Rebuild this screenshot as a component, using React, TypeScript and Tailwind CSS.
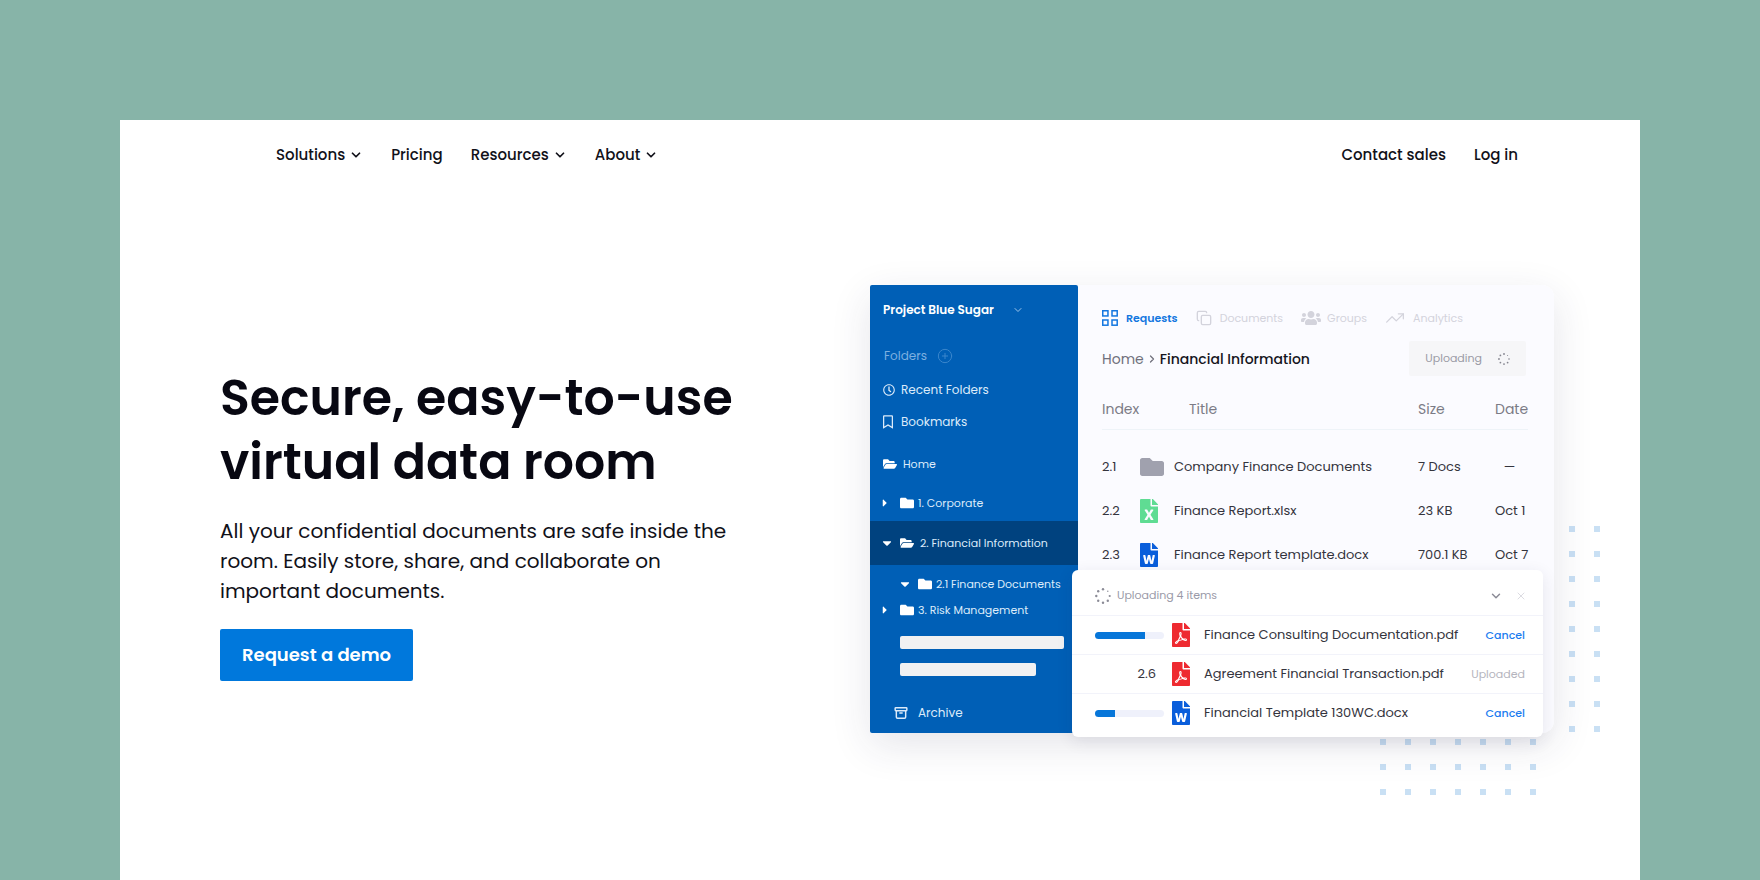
import * as React from "react";
import { Archive, ChevronDown, ChevronRight, CirclePlus, Copy, TrendingUp, X } from "lucide-react";
import {
  FaCaretDown,
  FaCaretRight,
  FaFileExcel,
  FaFilePdf,
  FaFileWord,
  FaFolder,
  FaFolderOpen,
  FaRegBookmark,
  FaRegClock,
  FaUsers,
} from "react-icons/fa";

type FileKind = "folder" | "excel" | "word" | "pdf";

interface DocumentRow {
  index: string;
  kind: FileKind;
  title: string;
  size: string;
  date: string;
}

interface UploadItem {
  kind: FileKind;
  title: string;
  progress?: number;
  index?: string;
}

const navLinks = [
  { label: "Solutions", menu: true },
  { label: "Pricing", menu: false },
  { label: "Resources", menu: true },
  { label: "About", menu: true },
];

const documents: DocumentRow[] = [
  { index: "2.1", kind: "folder", title: "Company Finance Documents", size: "7 Docs", date: "—" },
  { index: "2.2", kind: "excel", title: "Finance Report.xlsx", size: "23 KB", date: "Oct 1" },
  { index: "2.3", kind: "word", title: "Finance Report template.docx", size: "700.1 KB", date: "Oct 7" },
];

const uploads: UploadItem[] = [
  { kind: "pdf", title: "Finance Consulting Documentation.pdf", progress: 72 },
  { kind: "pdf", title: "Agreement Financial Transaction.pdf", index: "2.6" },
  { kind: "word", title: "Financial Template 130WC.docx", progress: 29 },
];

function FileIcon({ kind }: { kind: FileKind }) {
  if (kind === "folder") return <FaFolder className="size-6 text-[#a0a1ae]" />;
  if (kind === "excel") return <FaFileExcel className="h-6 w-[18px] text-[#5fdc93]" />;
  if (kind === "word") return <FaFileWord className="h-6 w-[18px] text-[#0a5edb]" />;
  return <FaFilePdf className="h-6 w-[18px] text-[#ee2a30]" />;
}

function GridIcon() {
  return (
    <svg viewBox="0 0 16 16" className="size-4" fill="none" stroke="currentColor" strokeWidth="1.5" aria-hidden="true">
      <rect x="0.75" y="0.75" width="5.2" height="5.2" />
      <rect x="10" y="0.75" width="5.2" height="5.2" />
      <rect x="0.75" y="10" width="5.2" height="5.2" />
      <rect x="10" y="10" width="5.2" height="5.2" />
    </svg>
  );
}

function Spinner({ className }: { className: string }) {
  return (
    <svg viewBox="0 0 16 16" className={className} fill="currentColor" aria-hidden="true">
      <circle cx="8" cy="1.3" r="1.2" />
      <circle cx="12.8" cy="3.2" r="0.7" />
      <circle cx="14.7" cy="8" r="1.1" />
      <circle cx="12.8" cy="12.8" r="1.2" />
      <circle cx="8" cy="14.7" r="1.2" />
      <circle cx="3.2" cy="12.8" r="1.2" />
      <circle cx="1.3" cy="8" r="1.2" />
      <circle cx="3.2" cy="3.2" r="1.2" />
    </svg>
  );
}

// Decorative grid of small squares behind the product window
function Dots({ columns, rows, className }: { columns: number; rows: number; className: string }) {
  const width = (columns - 1) * 25 + 6;
  const height = (rows - 1) * 25 + 6;
  return (
    <svg width={width} height={height} className={className} fill="#c9e0f4" aria-hidden="true">
      {Array.from({ length: columns * rows }, (_, i) => (
        <rect key={i} x={(i % columns) * 25} y={Math.floor(i / columns) * 25} width="6" height="6" />
      ))}
    </svg>
  );
}

function Header() {
  return (
    <header className="flex h-[70px] items-center justify-between pr-[122px] pl-[156px] text-[15px] font-medium text-[#111119]">
      <nav className="flex items-center gap-7">
        {navLinks.map((link) => (
          <a key={link.label} href="#" className="flex items-center gap-1">
            {link.label}
            {link.menu && <ChevronDown className="size-3.5" strokeWidth={3} />}
          </a>
        ))}
      </nav>
      <div className="flex items-center gap-7">
        <a href="#">Contact sales</a>
        <a href="#">Log in</a>
      </div>
    </header>
  );
}

function Sidebar() {
  return (
    <aside className="w-[208px] shrink-0 rounded-xs bg-[#005fb6] pt-[11px] pb-[7px] text-xs text-[#dcebfa]">
      <button className="flex h-7 items-center gap-[18px] pl-[13px] font-semibold text-white">
        Project Blue Sugar
        <ChevronDown className="size-3 text-[#9cc4ea]" />
      </button>
      <div className="mt-5 flex h-6 items-center gap-2.5 pl-3.5 text-[#7db0e0]">
        Folders
        <button aria-label="Add folder">
          <CirclePlus className="size-4 text-[#3a86cc]" strokeWidth={1.5} />
        </button>
      </div>
      <a href="#" className="mt-2 flex h-7 items-center gap-1.5 pl-[13px]">
        <FaRegClock className="size-3" />
        Recent Folders
      </a>
      <a href="#" className="mt-1 flex h-7 items-center gap-2 pl-[13px]">
        <FaRegBookmark className="h-3.5 w-2.5" />
        Bookmarks
      </a>
      <a href="#" className="mt-3.5 flex h-7 items-center gap-1.5 pl-[13px] text-[11px]">
        <FaFolderOpen className="size-3.5 text-white" />
        Home
      </a>
      <div className="text-[11px] whitespace-nowrap">
        <a href="#" className="mt-[11px] flex h-7 items-center pl-3">
          <FaCaretRight className="mr-3 h-3 w-1.5 text-white" />
          <FaFolder className="mr-1 size-3.5 text-white" />
          1. Corporate
        </a>
        <a href="#" className="mt-1 flex h-11 items-center bg-[#00427f] pl-3">
          <FaCaretDown className="mr-2 h-3.5 w-2.5 text-white" />
          <FaFolderOpen className="mr-1.5 size-3.5 text-white" />
          2. Financial Information
        </a>
        <a href="#" className="mt-1.5 flex h-[26px] items-center pl-[30px]">
          <FaCaretDown className="mr-2 h-3.5 w-2.5 text-white" />
          <FaFolder className="mr-1 size-3.5 text-white" />
          2.1 Finance Documents
        </a>
        <a href="#" className="flex h-[26px] items-center pl-3">
          <FaCaretRight className="mr-3 h-3 w-1.5 text-white" />
          <FaFolder className="mr-1 size-3.5 text-white" />
          3. Risk Management
        </a>
      </div>
      <div className="mt-[13px] ml-[30px] h-[13px] w-[164px] rounded-xs bg-[#f1f1f2]" />
      <div className="mt-3.5 ml-[30px] h-[13px] w-[136px] rounded-xs bg-[#f1f1f2]" />
      <a href="#" className="mt-6 flex h-[26px] items-center gap-2.5 pl-6">
        <Archive className="size-3.5" strokeWidth={2.5} />
        Archive
      </a>
    </aside>
  );
}

function Documents() {
  return (
    <div className="flex-1 rounded-r-xl bg-[#fbfbff] pt-[23px] pr-[26px] pl-6">
      <div className="flex h-5 items-center gap-[18px] text-[11px] text-[#d3d3dc]">
        <button className="flex items-center gap-2 font-semibold text-[#1377e0]">
          <GridIcon />
          Requests
        </button>
        <button className="flex items-center gap-2">
          <Copy className="size-4" strokeWidth={2} />
          Documents
        </button>
        <button className="flex items-center gap-1.5">
          <FaUsers className="size-5" />
          Groups
        </button>
        <button className="flex items-center gap-2">
          <TrendingUp className="size-5" strokeWidth={1.5} />
          Analytics
        </button>
      </div>

      <div className="mt-[13px] flex h-[35px] items-center justify-between">
        <div className="flex items-center gap-0.5 text-sm text-[#70707c]">
          <a href="#">Home</a>
          <ChevronRight className="size-3" strokeWidth={2.5} />
          <span className="font-medium text-[#15151d]">Financial Information</span>
        </div>
        <button className="mr-0.5 flex h-full items-center gap-4 rounded-xs bg-[#f6f6f8] px-4 text-[11px] text-[#9a9aa5]">
          Uploading
          <Spinner className="size-3 text-[#85858f]" />
        </button>
      </div>

      <table className="mt-[13px] w-full table-fixed text-left text-[13px] text-[#34343d]">
        <colgroup>
          <col className="w-[38px]" />
          <col className="w-[34px]" />
          <col />
          <col className="w-[77px]" />
          <col className="w-[33px]" />
        </colgroup>
        <thead className="border-b border-[#eef3f8] text-sm text-[#7b7b86]">
          <tr className="h-10 whitespace-nowrap">
            <th className="font-normal">Index</th>
            <th colSpan={2} className="pl-[49px] font-normal">
              Title
            </th>
            <th className="font-normal">Size</th>
            <th className="font-normal">Date</th>
          </tr>
        </thead>
        <tbody className="whitespace-nowrap before:block before:h-[15px]">
          {documents.map((doc) => (
            <tr key={doc.index} className="h-11">
              <td>{doc.index}</td>
              <td>
                <FileIcon kind={doc.kind} />
              </td>
              <td>{doc.title}</td>
              <td>{doc.size}</td>
              <td className={doc.date === "—" ? "pr-1 text-center" : ""}>{doc.date}</td>
            </tr>
          ))}
        </tbody>
      </table>
    </div>
  );
}

function UploadPanel() {
  return (
    <section className="absolute right-[11px] -bottom-1 w-[471px] rounded-md bg-white pb-[5px] shadow-[0_4px_16px_rgba(40,40,80,0.10)]">
      <div className="flex h-[45px] items-center pt-1.5 pr-4 pl-[23px]">
        <Spinner className="mr-1.5 size-4 text-[#8b8b96]" />
        <h2 className="flex-1 text-[11px] text-[#9a9aa8]">Uploading 4 items</h2>
        <button aria-label="Collapse" className="mr-3">
          <ChevronDown className="size-3.5 text-[#8b8b96]" strokeWidth={2.5} />
        </button>
        <button aria-label="Close">
          <X className="size-3 text-[#dcdce2]" />
        </button>
      </div>
      <ul>
        {uploads.map((item) => (
          <li
            key={item.title}
            className="flex h-[39px] items-center border-t border-[#f2f3fa] pr-[18px] pl-[23px] text-[13px] text-[#34343d]"
          >
            <div className="w-[69px]">
              {item.progress ? (
                <div className="h-[7px] overflow-hidden rounded-full bg-[#eff1fb]">
                  <div className="h-full bg-[#0776d9]" style={{ width: `${item.progress}%` }} />
                </div>
              ) : (
                <div className="pr-2 text-right">{item.index}</div>
              )}
            </div>
            <div className="mr-3.5 ml-2">
              <FileIcon kind={item.kind} />
            </div>
            <span className="flex-1 whitespace-nowrap">{item.title}</span>
            {item.progress ? (
              <button className="text-[11px] font-medium text-[#1b7cf0]">Cancel</button>
            ) : (
              <span className="text-[11px] text-[#b4b4bd]">Uploaded</span>
            )}
          </li>
        ))}
      </ul>
    </section>
  );
}

function Hero() {
  return (
    <main className="flex items-start justify-between pt-[95px] pr-[86px] pb-24 pl-[100px]">
      <div className="w-[540px] pt-[81px]">
        <h1 className="text-[49px] leading-[64px] font-semibold text-[#080812]">
          Secure, easy-to-use virtual data room
        </h1>
        <p className="mt-[22px] max-w-[520px] text-xl leading-[30px] text-[#111119]">
          All your confidential documents are safe inside the room. Easily store, share, and collaborate on important
          documents.
        </p>
        <button className="mt-[23px] h-[52px] rounded-xs bg-[#0078dc] px-[22px] text-lg font-semibold text-white">
          Request a demo
        </button>
      </div>

      <div className="relative w-[684px] shrink-0">
        <Dots columns={2} rows={9} className="absolute -right-[46px] bottom-px" />
        <Dots columns={7} rows={3} className="absolute right-[18px] -bottom-[62px]" />
        <div className="relative flex rounded-r-xl shadow-[0_12px_40px_rgba(40,40,80,0.12)]">
          <Sidebar />
          <Documents />
        </div>
        <UploadPanel />
      </div>
    </main>
  );
}

export default function App() {
  return (
    <div className="min-h-screen bg-[#87b4a8] px-[120px] pt-[120px] font-['Poppins','Inter',sans-serif]">
      <div className="min-h-[calc(100vh-120px)] bg-white">
        <Header />
        <Hero />
      </div>
    </div>
  );
}
